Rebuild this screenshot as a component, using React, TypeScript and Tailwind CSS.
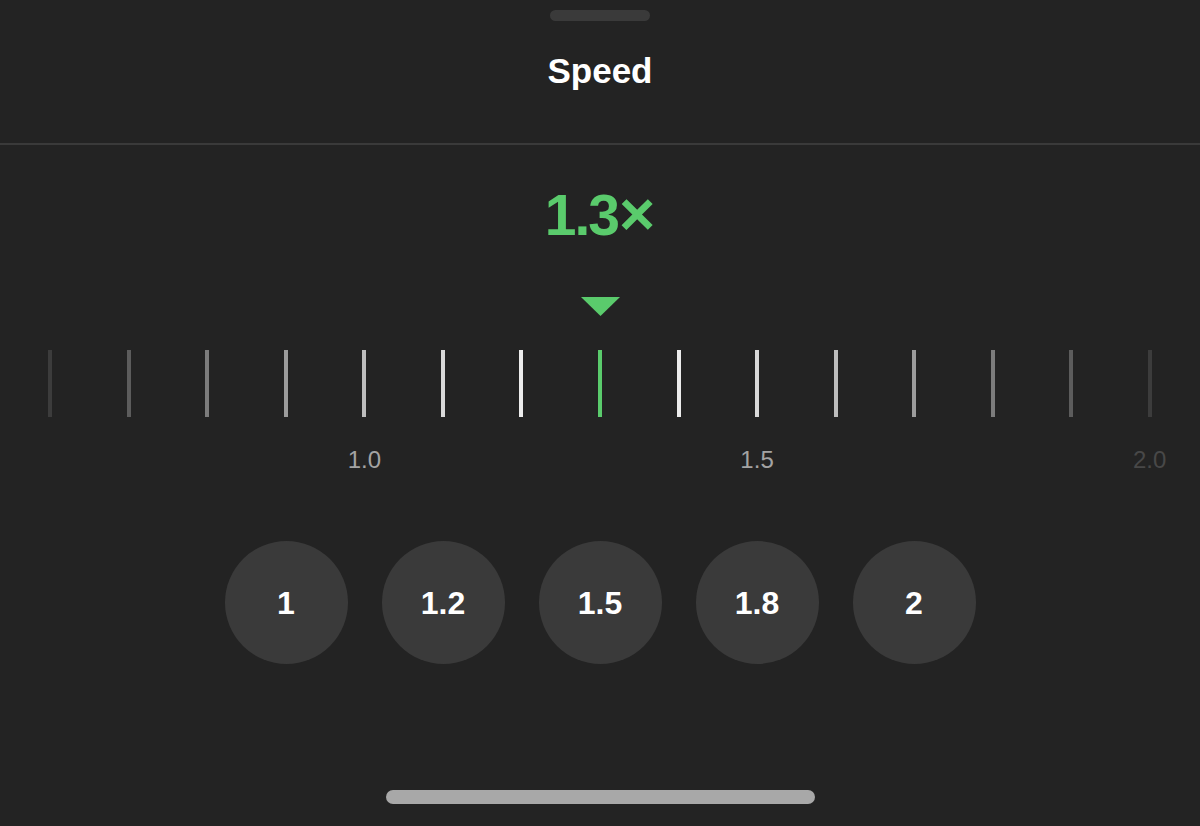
const ticks = [
  "bg-[#3c3c3c]",
  "bg-[#5c5c5c]",
  "bg-[#7c7c7c]",
  "bg-[#9c9c9c]",
  "bg-[#bdbdbd]",
  "bg-[#d9d9d9]",
  "bg-[#ececec]",
  "bg-[#5acb6c]",
  "bg-[#ececec]",
  "bg-[#d9d9d9]",
  "bg-[#bdbdbd]",
  "bg-[#9c9c9c]",
  "bg-[#7c7c7c]",
  "bg-[#5c5c5c]",
  "bg-[#3c3c3c]",
];

const labels: Record<number, { text: string; color: string }> = {
  4: { text: "1.0", color: "text-[#a3a3a3]" },
  9: { text: "1.5", color: "text-[#a3a3a3]" },
  14: { text: "2.0", color: "text-[#484848]" },
};

const presets = ["1", "1.2", "1.5", "1.8", "2"];

export default function App() {
  return (
    <div className="w-[1200px] h-[826px] bg-[#232323] flex flex-col font-['Liberation_Sans',Arial,sans-serif] overflow-hidden">
      {/* grabber */}
      <div className="pt-[10px] flex justify-center">
        <div className="w-[100px] h-[11px] rounded-full bg-[#3a3a3a]" />
      </div>

      <h1 className="mt-[30px] text-center text-white font-bold text-[35px] leading-[40px]">
        Speed
      </h1>

      <div className="mt-[52px] h-[2px] bg-[#3a3a3a]" />

      <div className="mt-[40px] h-[57px] flex justify-center items-baseline text-[#5acb6c] font-bold text-[57px] leading-[57px]">
        <span className="tracking-[-2px]">1.3</span>
        <span className="text-[62px] leading-[57px] ml-[1px]">×</span>
      </div>

      <div className="mt-[55px] flex justify-center">
        <svg width="39" height="19" viewBox="0 0 39 19">
          <polygon points="0,0 39,0 19.5,19" fill="#5acb6c" />
        </svg>
      </div>

      {/* ruler */}
      <div className="mt-[34px] px-[11px] flex">
        {ticks.map((c, i) => (
          <div key={i} className="flex-1 flex justify-center">
            <div className={`w-[4px] h-[67px] ${c}`} />
          </div>
        ))}
      </div>
      <div className="mt-[31px] px-[11px] flex">
        {ticks.map((_, i) => (
          <div key={i} className="flex-1 flex justify-center">
            <span className={`text-[24px] leading-[24px] whitespace-nowrap ${labels[i]?.color ?? ""}`}>
              {labels[i]?.text ?? ""}
            </span>
          </div>
        ))}
      </div>

      {/* presets */}
      <div className="mt-[69px] flex justify-center gap-[34px]">
        {presets.map((p) => (
          <button
            key={p}
            className="w-[123px] h-[123px] rounded-full bg-[#3a3a3a] text-white font-bold text-[32px] flex items-center justify-center"
          >
            {p}
          </button>
        ))}
      </div>

      <div className="mt-[126px] flex justify-center">
        <div className="w-[429px] h-[14px] rounded-full bg-[#a8a8a8]" />
      </div>
    </div>
  );
}
